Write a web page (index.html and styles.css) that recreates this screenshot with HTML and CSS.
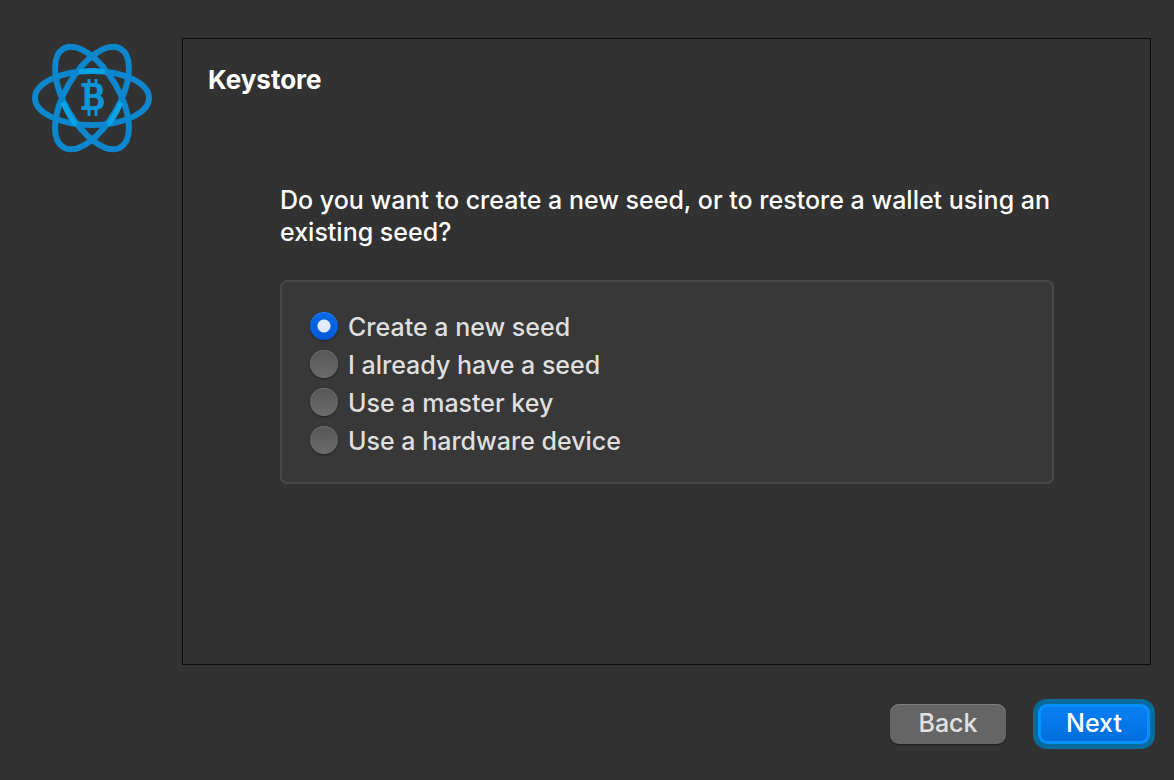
FILE: index.html
```html
<!DOCTYPE html>
<html lang="en">
<head>
	<meta charset="utf-8">
	<meta name="viewport" content="width=device-width, initial-scale=1">
	<title>Keystore</title>
	<link rel="stylesheet" href="styles.css">
</head>
<body>
	<form class="wizard">
		<div class="wizard-main">
			<svg class="logo" viewBox="0 0 120 112" role="img" aria-label="Bitcoin wallet">
				<g class="orbits">
					<ellipse cx="60" cy="56" rx="57" ry="27"/>
					<ellipse cx="60" cy="56" rx="57" ry="27" transform="rotate(60 60 56)"/>
					<ellipse cx="60" cy="56" rx="57" ry="27" transform="rotate(120 60 56)"/>
				</g>
				<path class="glow" d="M47 29.500Q60 28.500 73 29.500M31 60Q36 73 44 83M89 60Q84 73 76 83"/>
				<text class="coin" x="61" y="67" text-anchor="middle">B</text>
				<path class="coin-bars" d="M57 37V44M64 37V44M57 67V74M64 67V74"/>
			</svg>
			<main class="panel">
				<h1>Keystore</h1>
				<div class="content">
					<p class="question" id="question">Do you want to create a new seed, or to restore a wallet using an existing seed?</p>
					<div class="options" role="radiogroup" aria-labelledby="question">
						<label class="option"><input type="radio" name="keystore" value="create" checked>Create a new seed</label>
						<label class="option"><input type="radio" name="keystore" value="restore">I already have a seed</label>
						<label class="option"><input type="radio" name="keystore" value="master">Use a master key</label>
						<label class="option"><input type="radio" name="keystore" value="hardware">Use a hardware device</label>
					</div>
				</div>
			</main>
		</div>
		<div class="buttons">
			<button type="button" class="btn">Back</button>
			<button type="submit" class="btn btn-next">Next</button>
		</div>
	</form>
</body>
</html>
```
FILE: styles.css
```css
* {
	box-sizing: border-box;
}
body {
	margin: 0;
	background-color: #323232;
	color: #fff;
	font-family: Inter, "Liberation Sans", sans-serif;
	font-size: 25px;
	font-weight: 500;
	line-height: 32px;
}
.wizard {
	display: flex;
	flex-direction: column;
	min-height: 100vh;
	padding: 38px 23px 36px 32px;
}
.wizard-main {
	display: flex;
	flex: 1;
	align-items: flex-start;
	gap: 30px;
}
.logo {
	flex: none;
	width: 120px;
	margin-top: 4px;
}
.orbits {
	fill: none;
	stroke: #0c86cd;
	stroke-width: 6;
}
.glow {
	fill: none;
	stroke: #05a5e6;
	stroke-width: 5;
}
.coin {
	fill: #0c96d8;
	font-family: "DejaVu Serif", serif;
	font-size: 33px;
	font-weight: 400;
	stroke: #0c96d8;
	stroke-width: 2;
}
.coin-bars {
	stroke: #0c96d8;
	stroke-width: 3;
}
.panel {
	flex: 1;
	align-self: stretch;
	padding: 25px;
	border: 1px solid #0c0c0c;
}
h1 {
	margin: 0;
	font-size: 26px;
	font-weight: 700;
	line-height: 32px;
}
.content {
	margin: 88px 71px 0 72px;
}
.question {
	margin: 0 0 32px;
}
.options {
	padding: 26px 28px 22px;
	background-color: #383838;
	border: 2px solid #484848;
	border-radius: 7px;
}
.option {
	display: flex;
	align-items: center;
	gap: 10px;
	height: 38px;
	color: #dfdfdf;
}
.option input {
	appearance: none;
	flex: none;
	width: 28px;
	height: 28px;
	margin: 0 0 2px;
	border-radius: 50%;
	background: linear-gradient(#565656, #6c6c6c);
	box-shadow: 0 1px 2px rgba(0, 0, 0, 0.4), inset 0 1px 0 rgba(255, 255, 255, 0.15);
}
.option input:checked {
	background: radial-gradient(circle, #dfebfc 6px, transparent 7px), linear-gradient(#0a6bea, #0059d6);
}
.buttons {
	display: flex;
	justify-content: flex-end;
	gap: 32px;
	margin-top: 39px;
	padding-right: 1px;
}
.btn {
	min-width: 116px;
	height: 40px;
	padding: 0 24px 2px;
	border: none;
	border-radius: 9px;
	background-color: #656565;
	box-shadow: 0 1px 2px rgba(0, 0, 0, 0.4), inset 0 1px 0 #7c7c7c;
	color: #e2e2e2;
	font: inherit;
}
.btn-next {
	min-width: 112px;
	background: linear-gradient(#0a80f6, #006ddc);
	box-shadow: 0 0 0 5px #076c9c, inset 0 0 0 3px #0690fa;
	color: #fff;
}
```
